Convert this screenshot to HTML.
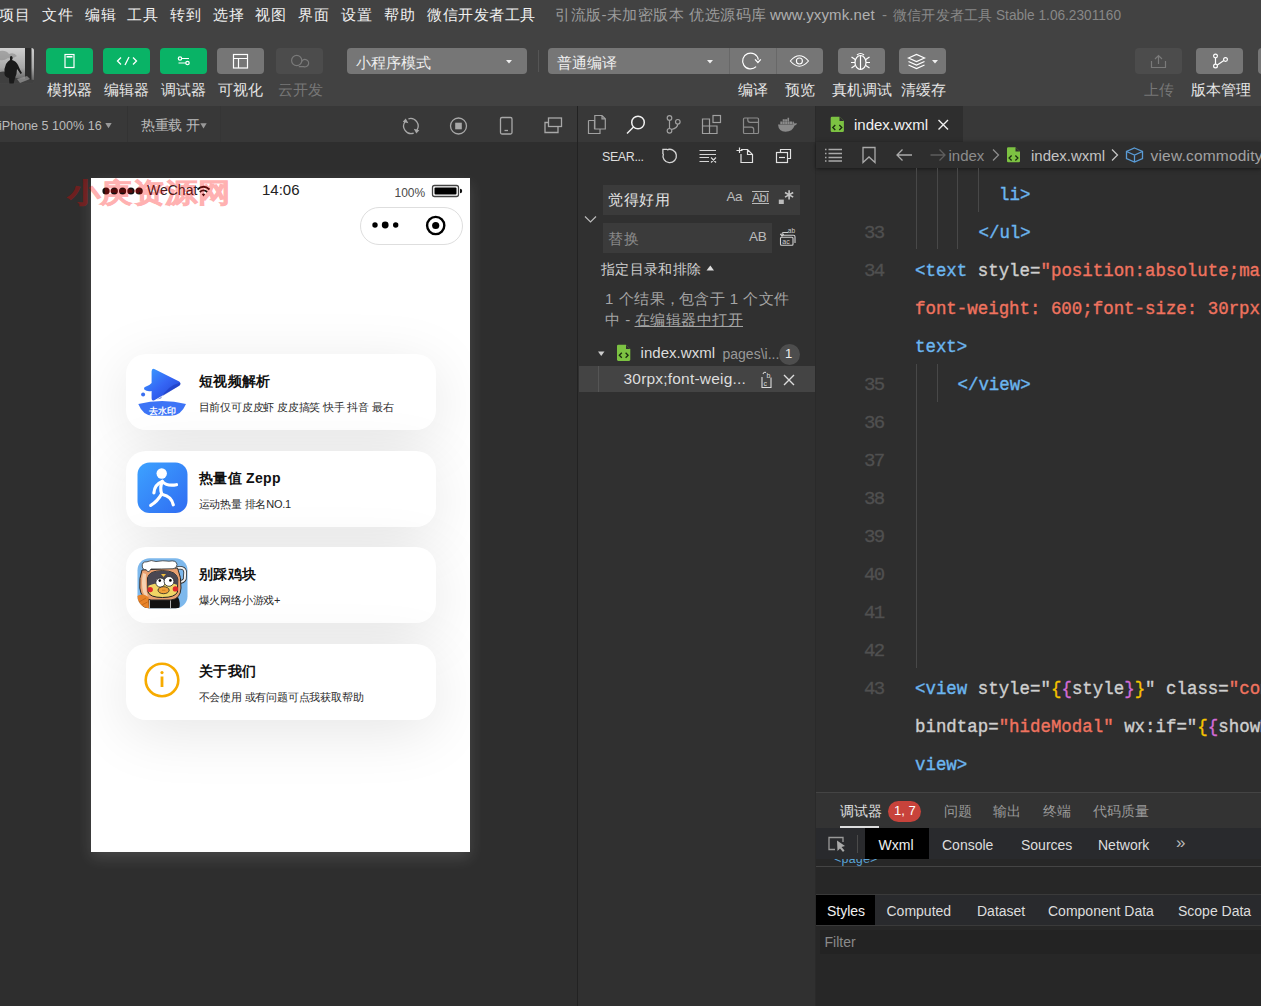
<!DOCTYPE html>
<html><head><meta charset="utf-8">
<style>
*{box-sizing:border-box;margin:0;padding:0}
html,body{width:1261px;height:1006px;overflow:hidden;background:#424242;font-family:"Liberation Sans",sans-serif;color:#ddd}
.a{position:absolute}
.t{position:absolute;white-space:nowrap;line-height:1}
svg{position:absolute;overflow:visible}
/* menu */
#menu .t{font-size:15px;letter-spacing:.5px;color:#f0f0f0;top:6.5px}
.btn{position:absolute;top:48px;height:26px;width:47px;border-radius:4px}
.g{background:#09b366}
.lbl{position:absolute;top:82px;font-size:15px;color:#e6e6e6;white-space:nowrap;line-height:1}
/* code */
.code{position:absolute;left:915px;margin-top:1.5px;font-family:"Liberation Mono",monospace;font-size:17.43px;white-space:pre;line-height:1;-webkit-text-stroke:.35px currentColor}
.ln{position:absolute;left:864px;margin-top:1px;font-family:"Liberation Mono",monospace;font-size:19px;letter-spacing:-1.6px;color:#505050;line-height:1;-webkit-text-stroke:.3px #505050}
.tg{color:#6cb6f0}.at{color:#cfcfcf}.st{color:#f0735f}.br1{color:#f5c400}.br2{color:#d36bd6}
.guide{position:absolute;width:1px;background:#484848}
.card{position:absolute;left:35px;width:310px;height:76px;border-radius:20px;background:#fff;box-shadow:0 12px 60px rgba(0,0,0,.1)}
.ct{position:absolute;left:108px;font-size:14px;letter-spacing:.3px;font-weight:bold;color:#111;white-space:nowrap;line-height:1}
.cs{position:absolute;left:107.5px;font-size:11px;letter-spacing:-.2px;color:#2a2a2a;white-space:nowrap;line-height:1}
</style></head><body>

<!-- MENU -->
<div id="menu">
<div class="t" style="left:-1px">项目</div>
<div class="t" style="left:42px">文件</div>
<div class="t" style="left:85px">编辑</div>
<div class="t" style="left:127px">工具</div>
<div class="t" style="left:170px">转到</div>
<div class="t" style="left:213px">选择</div>
<div class="t" style="left:255px">视图</div>
<div class="t" style="left:298px">界面</div>
<div class="t" style="left:341px">设置</div>
<div class="t" style="left:384px">帮助</div>
<div class="t" style="left:427px">微信开发者工具</div>
<div class="t" style="left:555px;color:#9c9c9c">引流版-未加密版本</div>
<div class="t" style="left:689px;color:#9c9c9c">优选源码库</div>
<div class="t" style="left:770px;color:#b0b0b0;letter-spacing:.1px">www.yxymk.net</div>
<div class="t" style="left:882px;color:#888">-</div>
<div class="t" style="left:893px;top:8px;color:#888;font-size:14px;letter-spacing:.2px">微信开发者工具</div>
<div class="t" style="left:996px;color:#888;letter-spacing:0;transform-origin:0 0;transform:scaleX(.91)">Stable 1.06.2301160</div>
</div>

<!-- TOOLBAR -->
<svg style="left:0;top:48px" width="34" height="36">
 <defs><linearGradient id="av" x1="0" y1="0" x2="0" y2="1"><stop offset="0" stop-color="#d0d0d0"/><stop offset=".55" stop-color="#a8a8a8"/><stop offset="1" stop-color="#4a4a4a"/></linearGradient>
 <clipPath id="avc"><rect x="-2" y="0" width="36" height="35.6" rx="2.5"/></clipPath></defs>
 <g clip-path="url(#avc)">
 <rect x="0" y="0" width="34" height="36" fill="url(#av)"/>
 <path d="M0 3 Q6 2 9 6 Q14 4 17 8 Q13 11 8 10 Q4 13 0 12Z" fill="#8a8a8a" opacity=".6"/>
 <rect x="25" y="0" width="6.5" height="32" fill="#2c2c2c"/>
 <path d="M0 24 Q8 22 16 30 L34 32 V36 H0Z" fill="#404040"/>
 <path d="M10 9 Q11 7 12.5 9 Q13 11 12 12 Q16 13 18 17 Q20 22 22 25 L20.5 26 Q18 22 17 21 Q17 26 15 30 L13.5 36 H9.5 Q9 32 9 30 Q5 29 4.5 26 Q4 20 6 16 Q8 13 10 12Z" fill="#1a1a1a"/>
 <path d="M17 31 L27 28 L30 31 L20 35Z" fill="#9a9a9a" opacity=".7"/>
 </g>
</svg>
<div class="btn g" style="left:46px"></div>
<div class="btn g" style="left:103px"></div>
<div class="btn g" style="left:160px"></div>
<div class="btn" style="left:217px;background:#767676"></div>
<div class="btn" style="left:276px;background:#4c4c4c"></div>
<div class="lbl" style="left:47px">模拟器</div>
<div class="lbl" style="left:104px">编辑器</div>
<div class="lbl" style="left:161px">调试器</div>
<div class="lbl" style="left:218px">可视化</div>
<div class="lbl" style="left:278px;color:#777">云开发</div>

<div class="a" style="left:347px;top:48px;width:180px;height:26px;background:#767676;border-radius:4px"></div>
<div class="t" style="left:356px;top:55px;font-size:15px;color:#eee">小程序模式</div>
<div class="a" style="left:538px;top:50px;width:1px;height:22px;background:#555"></div>
<div class="a" style="left:548px;top:48px;width:275px;height:26px;background:#767676;border-radius:4px"></div>
<div class="a" style="left:729px;top:48px;width:1px;height:26px;background:#686868"></div>
<div class="a" style="left:776px;top:48px;width:1px;height:26px;background:#686868"></div>
<div class="t" style="left:557px;top:55px;font-size:15px;color:#eee">普通编译</div>
<div class="btn" style="left:838px;background:#767676"></div>
<div class="btn" style="left:899px;background:#767676"></div>
<div class="lbl" style="left:738px">编译</div>
<div class="lbl" style="left:785px">预览</div>
<div class="lbl" style="left:832px">真机调试</div>
<div class="lbl" style="left:901px">清缓存</div>
<div class="btn" style="left:1135px;background:#4c4c4c"></div>
<div class="btn" style="left:1196px;background:#767676"></div>
<div class="btn" style="left:1258px;background:#767676"></div>
<div class="lbl" style="left:1144px;color:#777">上传</div>
<div class="lbl" style="left:1191px">版本管理</div>

<!-- SIMULATOR -->
<div class="a" style="left:0;top:106px;width:577px;height:900px;background:#2e2e2e"></div>
<div class="a" style="left:0;top:106px;width:577px;height:36px;background:#383838"></div>
<div class="a" style="left:127px;top:106px;width:1px;height:36px;background:#333"></div>
<div class="a" style="left:220px;top:106px;width:1px;height:36px;background:#353535"></div>
<div class="t" style="left:-1px;top:118.5px;font-size:13.5px;color:#bbb;transform-origin:0 0;transform:scaleX(.93)">iPhone 5 100% 16</div>
<div class="t" style="left:141px;top:118px;font-size:14px;color:#bbb;letter-spacing:-.3px">热重载 开</div>
<div class="a" style="left:577px;top:106px;width:1px;height:900px;background:#222"></div>

<!-- phone -->
<div class="a" style="left:91px;top:178px;width:379px;height:674px;background:#fff;box-shadow:0 6px 14px rgba(255,255,255,.13);overflow:hidden">
 <!-- status bar -->
 <svg style="left:0;top:0" width="379" height="70">
  <g fill="#111"><circle cx="15" cy="13" r="3.6"/><circle cx="23.3" cy="13" r="3.6"/><circle cx="31.6" cy="13" r="3.6"/><circle cx="39.9" cy="13" r="3.6"/><circle cx="48.2" cy="13" r="3.6"/></g>
  <g fill="none" stroke="#111" stroke-width="1.8"><path d="M106.5 11.5 Q112.5 6 118.5 11.5"/><path d="M108.8 14 Q112.5 10.8 116.2 14"/></g>
  <path d="M110.8 16.2 L112.5 18.5 L114.2 16.2 Q112.5 14.8 110.8 16.2Z" fill="#111"/>
  <rect x="341.5" y="7.5" width="26" height="11" rx="2" fill="none" stroke="#444" stroke-width="1.3"/>
  <rect x="343.5" y="9.5" width="22" height="7" rx="1" fill="#000"/>
  <path d="M369 10.8 A2.2 2.2 0 0 1 369 15.2 Z" fill="#111"/>
 </svg>
 <div class="t" style="left:56px;top:5px;font-size:14px;color:#222">WeChat</div>
 <div class="t" style="left:171px;top:4px;font-size:15px;color:#222">14:06</div>
 <div class="t" style="left:303.5px;top:9px;font-size:12px;color:#4a4a4a">100%</div>
 <!-- capsule -->
 <div class="a" style="left:268.5px;top:29px;width:103px;height:37.5px;border:1px solid #dedede;border-radius:19px;background:#fff"></div>
 <svg style="left:0;top:0" width="379" height="70">
  <circle cx="284" cy="47" r="2.7" fill="#000"/><circle cx="294.2" cy="47" r="3.4" fill="#000"/><circle cx="304.7" cy="47" r="2.7" fill="#000"/>
  <circle cx="344.7" cy="47.5" r="8.6" fill="none" stroke="#000" stroke-width="2.4"/><circle cx="344.7" cy="47.5" r="3.6" fill="#000"/>
 </svg>
 <!-- cards -->
 <div class="card" style="top:176px"></div>
 <div class="card" style="top:273px"></div>
 <div class="card" style="top:369px"></div>
 <div class="card" style="top:466px"></div>
 <div class="ct" style="top:196px">短视频解析</div>
 <div class="cs" style="top:223.5px">目前仅可皮皮虾 皮皮搞笑 快手 抖音 最右</div>
 <div class="ct" style="top:293px">热量值 Zepp</div>
 <div class="cs" style="top:320.5px">运动热量 排名NO.1</div>
 <div class="ct" style="top:389px">别踩鸡块</div>
 <div class="cs" style="top:416.5px">爆火网络小游戏+</div>
 <div class="ct" style="top:486px">关于我们</div>
 <div class="cs" style="top:513.5px">不会使用 或有问题可点我获取帮助</div>
 <!-- icons -->
 <svg style="left:0;top:0" width="379" height="674">
  <defs>
   <linearGradient id="pl" x1="0" y1="0" x2="1" y2="1"><stop offset="0" stop-color="#3aa0ff"/><stop offset=".5" stop-color="#3566f5"/><stop offset="1" stop-color="#1f3fd0"/></linearGradient>
   <linearGradient id="zp" x1="0" y1="0" x2="1" y2="1"><stop offset="0" stop-color="#3da2ff"/><stop offset="1" stop-color="#2f6cf2"/></linearGradient>
  </defs>
  <!-- play icon -->
  <path d="M60.6 193.5 Q60.6 189.8 63.8 191.2 L88.2 203.5 Q90.6 205.7 88.2 207.8 L63.8 222 Q60.6 223.8 60.6 220.2 L60.6 213 Q56 213.8 53.5 211.8 Q52.2 209.8 54.5 208.8 Q59 207.2 60.6 205 Z" fill="url(#pl)"/>
  <path d="M70 220.5 Q76 208 88.6 204.8 Q90.6 205.7 88.2 207.8 L66 221.5Z" fill="#1c36b8" opacity=".55"/>
  <circle cx="52.1" cy="216.6" r="2" fill="#3a6ff0"/>
  <path d="M47.3 226 Q71 220 95 226 Q90 237.8 80 237.8 L62 237.8 Q52 237.8 47.3 226Z" fill="#3d74f6"/>
  <text x="71" y="235.5" font-size="8.5" fill="#fff" text-anchor="middle" font-weight="bold">去水印</text>
  <!-- zepp -->
  <rect x="46.5" y="284.5" width="50" height="50.5" rx="12" fill="url(#zp)"/>
  <g fill="none" stroke="#fff" stroke-width="3.2" stroke-linecap="round">
   <path d="M62.9 314.8 Q63.5 306.5 71.3 303.5 Q76 308.5 85.5 306.7"/>
   <path d="M71.3 303.5 Q68.5 309.5 70.7 315.8 Q66.5 323.5 59.7 327.4"/>
   <path d="M71.5 316.5 Q80.4 318.4 82.3 326.8"/>
  </g>
  <circle cx="70.7" cy="295.5" r="5.2" fill="#fff"/>
  <!-- chicken -->
  <g>
   <clipPath id="ck"><rect x="46.5" y="380.2" width="50" height="50" rx="12"/></clipPath>
   <g clip-path="url(#ck)">
    <rect x="46" y="380" width="51" height="51" fill="#7db8ec"/>
    <path d="M52 421 Q50 431 53 431 H88 Q90 425 87 419 Z" fill="#111"/>
    <path d="M58.5 421 V431 M79.5 421 V431" stroke="#ddd" stroke-width=".8"/>
    <path d="M84.5 390.5 Q93.5 388 94.2 394 L93.8 401 Q92.5 404.5 86 404" fill="none" stroke="#333" stroke-width="3.6"/>
    <path d="M84.5 390.5 Q93.5 388 94.2 394 L93.8 401 Q92.5 404.5 86 404" fill="none" stroke="#f4f4f4" stroke-width="2"/>
    <path d="M51 392 Q48 400 48.8 410 Q50 421 60 422 L80 422 Q89.5 421 90 410 Q90.5 399 86.5 390 Z" fill="#e9a070" stroke="#2a2a2a" stroke-width="1"/>
    <path d="M52 395 Q50 405 52 414 Q54 419 57 420 Q54 408 55 396Z" fill="#f6d2b2"/>
    <path d="M56.5 400 Q58 392.7 71.5 392.7 Q85.5 392.7 86.8 401 L86.5 414 Q84 419.5 71.5 419.5 Q59 419.5 57 414Z" fill="#f0d565" stroke="#222" stroke-width="1"/>
    <path d="M56.7 400 Q58 392.7 71.5 392.7 Q85.5 392.7 86.8 401 L86.7 407 Q80 404 72 405 Q63 405 56.8 408Z" fill="#4a4752"/>
    <path d="M70 396 L72.5 399 L75 396Z" fill="#f0c040"/>
    <circle cx="69.4" cy="404.6" r="4.6" fill="#fff" stroke="#222" stroke-width=".8"/><circle cx="78" cy="403.4" r="4.9" fill="#fff" stroke="#222" stroke-width=".8"/>
    <circle cx="68.8" cy="402.6" r="1.3" fill="#000"/><circle cx="79.4" cy="402.4" r="1.3" fill="#000"/>
    <circle cx="59.2" cy="411.6" r="2.7" fill="#e02a2a"/><circle cx="84.4" cy="410.9" r="2.7" fill="#e02a2a"/>
    <ellipse cx="72.6" cy="412.2" rx="5.6" ry="3.5" fill="#f0a038" stroke="#222" stroke-width=".8"/>
    <path d="M71 412.2 H74.5" stroke="#b56a10" stroke-width=".6"/>
    <path d="M51.3 389 Q50.5 383.5 56 383.8 Q60 381.5 65 383.5 Q72 382.2 78 383.2 Q85.5 381.8 86 386.5 Q86 390.5 82 390.8 Q70 391 60 391 Q58 395 56.5 393.5 Q55.5 391 53.5 391.5 Q51.5 391 51.3 389Z" fill="#fff" stroke="#333" stroke-width=".8"/>
    <path d="M46 418 Q52 414.5 57.5 419 L58 431 H46Z" fill="#e8832a"/>
    <path d="M48 424 L55 420 M49 428 L56.5 424" stroke="#b05a10" stroke-width=".6"/>
   </g>
  </g>
  <!-- info -->
  <circle cx="71" cy="502" r="16.3" fill="none" stroke="#f7ab00" stroke-width="2.6"/>
  <circle cx="71" cy="494.6" r="1.6" fill="#f7ab00"/>
  <rect x="69.6" y="498.5" width="2.8" height="10.5" fill="#f7ab00"/>
 </svg>
</div>
<div class="t" style="left:68px;top:180px;font-size:27px;font-weight:bold;-webkit-text-stroke:.7px #ff0000;color:#ff0000;opacity:.3;transform-origin:0 0;transform:scaleX(1.2)">小庚资源网</div>

<!-- SEARCH PANEL -->
<div class="a" style="left:578px;top:106px;width:237px;height:900px;background:#303030"></div>
<div class="a" style="left:578px;top:106px;width:237px;height:36px;background:#383838"></div>
<div class="a" style="left:815px;top:106px;width:1px;height:900px;background:#2a2a2a"></div>
<div class="t" style="left:602px;top:151px;font-size:12.5px;color:#ddd;letter-spacing:-.4px">SEAR...</div>
<div class="a" style="left:603px;top:184.5px;width:197px;height:30.5px;background:#3b3b3b"></div>
<div class="a" style="left:603px;top:223px;width:169px;height:30px;background:#3b3b3b"></div>
<div class="t" style="left:608px;top:192px;font-size:15px;letter-spacing:.5px;color:#e2e2e2">觉得好用</div>
<div class="t" style="left:608px;top:230.5px;font-size:15px;letter-spacing:.5px;color:#8a8a8a">替换</div>
<div class="t" style="left:726.5px;top:190px;font-size:13.5px;color:#bbb;letter-spacing:-.5px">Aa</div>
<div class="t" style="left:752px;top:192px;font-size:12.5px;color:#bbb;letter-spacing:-.8px">AbI</div><div class="a" style="left:751.5px;top:190.5px;width:17px;height:1.2px;background:#bbb"></div><div class="a" style="left:751.5px;top:203px;width:17px;height:1.2px;background:#bbb"></div>
<div class="t" style="left:749px;top:229.5px;font-size:13.5px;color:#bbb;letter-spacing:-.3px">AB</div>
<div class="t" style="left:601px;top:262px;font-size:14px;letter-spacing:.35px;color:#d0d0d0">指定目录和排除</div>
<div class="t" style="left:605px;top:291px;font-size:15px;color:#a5a5a5;letter-spacing:.5px">1 个结果，</div>
<div class="t" style="left:678.5px;top:291px;font-size:15px;color:#a5a5a5;letter-spacing:.5px">包含于 1 个文件</div>
<div class="t" style="left:605px;top:312px;font-size:15px;color:#a5a5a5;letter-spacing:.5px">中 -</div>
<div class="t" style="left:634.5px;top:312px;font-size:15px;color:#a5a5a5;letter-spacing:.5px;text-decoration:underline;text-underline-offset:1px">在编辑器中打开</div>
<div class="t" style="left:640.5px;top:345px;font-size:15px;color:#ddd;letter-spacing:.05px">index.wxml</div>
<div class="t" style="left:722.5px;top:346.5px;font-size:14px;color:#999;letter-spacing:0">pages\i...</div>
<div class="a" style="left:778.5px;top:343.5px;width:21px;height:21px;border-radius:50%;background:#4d4d4d"></div>
<div class="t" style="left:785px;top:347px;font-size:13px;color:#eee">1</div>
<div class="a" style="left:579px;top:366px;width:236px;height:26px;background:#444"></div>
<div class="a" style="left:598px;top:366px;width:1px;height:26px;background:#555"></div>
<div class="t" style="left:623.5px;top:371px;font-size:15.5px;color:#ddd;letter-spacing:.2px">30rpx;font-weig...</div>
<svg style="left:0;top:0" width="816" height="400" fill="none" stroke="#a0a0a0" stroke-width="1.2">
 <path d="M588.5 120.5 H594.5 V129 M588.5 120.5 V133.5 H600 V129"/>
 <path d="M594.8 115.5 H602 L605.3 118.8 V129 H594.8 Z M602 115.5 V118.8 H605.3"/>
 <g stroke="#f2f2f2" stroke-width="1.5"><circle cx="638" cy="122.5" r="6.3"/><path d="M633.5 127 L627 133.5"/></g>
 <circle cx="669.5" cy="118" r="2.3"/><circle cx="669.5" cy="130.8" r="2.3"/><circle cx="677.8" cy="121.8" r="2.3"/>
 <path d="M669.5 120.3 V128.5 M677.8 124.1 Q677.5 128 671.5 129.5"/>
 <path d="M702.5 126 H709.5 V133.5 H702.5 Z M709.5 126 H717 V133.5 H709.5 M702.5 126 V119 H709.5 V126"/>
 <rect x="713" y="115.5" width="7.5" height="7"/>
 <g stroke="#8c8c8c"><rect x="743.5" y="118" width="15" height="15.5" rx="1"/>
 <path d="M747.8 118 V120 Q747.8 122.3 750.2 122.3 H758.5 M743.5 127.2 H751.3 Q753.7 127.2 753.7 129.6 V133.5"/></g>
 <path d="M778 124.6 H793.2 Q794.5 122.6 797.2 123.4 Q796 125.2 794.6 125.6 Q792.5 131.8 785.5 131.8 Q778.6 131.8 778 124.6 Z" fill="#8a8a8a" stroke="none"/>
 <path d="M792.4 124.6 Q792 122.5 793 121 Q794.5 122.5 794.6 124.6Z" fill="#8a8a8a" stroke="none"/>
 <path d="M780.3 121.6 h2.1 v2.6 h-2.1z M782.7 121.6 h2.1 v2.6 h-2.1z M785.1 121.6 h2.1 v2.6 h-2.1z M787.5 121.6 h2.1 v2.6 h-2.1z M789.9 121.6 h2.1 v2.6 h-2.1z M782.7 119.2 h2.1 v2.1 h-2.1z M785.1 119.2 h2.1 v2.1 h-2.1z M787.5 117.8 h1.6 v3.5 h-1.6z" fill="#8a8a8a" stroke="none"/>
 <g stroke="#d5d5d5" stroke-width="1.3"><path d="M666.9 149.9 A6.7 6.7 0 1 1 663.4 153.7"/><path d="M662.3 149.3 H667 M662.9 149.3 V154"/></g>
 <g stroke="#d5d5d5"><path d="M699.5 150.5 H716 M699.5 154.5 H716 M699.5 157.5 H709 M699.5 161.5 H709 M711 157.5 L716 162.5 M716 157.5 L711 162.5"/></g>
 <g stroke="#e2e2e2"><path d="M741 149.5 H747.5 L752.5 154.5 V162.5 H741 V154 M747.5 149.5 V154.5 H752.5 M739.5 147.5 V153 M736.5 150.5 H742.5"/></g>
 <g stroke="#e2e2e2"><path d="M780.5 152.5 V149.5 H790.5 V158.5 H787.5"/><rect x="776.5" y="152.5" width="11" height="10"/><path d="M779 157.5 H785"/></g>
 <path d="M585 216.5 L590.5 222 L596 216.5" stroke="#bbb"/>
 <rect x="778.8" y="199.6" width="5" height="4.4" fill="#bbb" stroke="none"/>
 <path d="M789.1 190.2 V199.4 M785 192.5 L793.2 197.1 M793.2 192.5 L785 197.1" stroke="#c4c4c4" stroke-width="1.6"/>
 <g stroke="#cfcfcf" stroke-width="1.1"><rect x="780.5" y="237.2" width="12.5" height="8" rx="1"/><path d="M782.5 235.2 H793.5 Q795 235.2 795 236.7 V243"/><path d="M788 232.5 H783.5 Q782 232.5 782 234 V236"/><path d="M780.3 233.8 L782 236 L783.7 233.8"/></g>
 <text x="782.3" y="243.8" font-size="7" fill="#cfcfcf" stroke="none" font-family="Liberation Sans">ac</text>
 <text x="787.8" y="233.2" font-size="6.5" fill="#cfcfcf" stroke="none" font-family="Liberation Sans">ab</text>
 <path d="M706.5 270.5 L710.3 265.5 L714 270.5 Z" fill="#ddd" stroke="none"/>
 <path d="M598 351.5 H604.5 L601.2 356 Z" fill="#ccc" stroke="none"/>
 <path d="M617 346 Q617 344.7 618.3 344.7 H626 L630.3 349 V359.5 Q630.3 360.9 629 360.9 H618.3 Q617 360.9 617 359.5 Z" fill="#7cc242" stroke="none"/>
 <path d="M626 344.7 V349 H630.3 Z" fill="#303030" stroke="none"/>
 <path d="M621.8 352.8 L619.3 355.3 L621.8 357.8 M625.6 352.8 L628.1 355.3 L625.6 357.8" stroke="#1a2a10" stroke-width="1.3"/>
 <g stroke="#ddd" stroke-width="1.1"><path d="M762 377 V387.5 H771 V377.5"/><text x="763.5" y="386" font-size="7" fill="#ddd" stroke="none" font-family="Liberation Sans">c</text><path d="M763 374 Q764 371.5 766 372.5"/><text x="766.5" y="378" font-size="7" fill="#ddd" stroke="none" font-family="Liberation Sans">b</text></g>
 <path d="M784 375 L794 385 M794 375 L784 385" stroke="#ddd" stroke-width="1.4"/>
</svg>

<!-- EDITOR -->
<div class="a" style="left:816px;top:106px;width:445px;height:686px;background:#2e2e2e"></div>
<div class="a" style="left:963px;top:106px;width:298px;height:35.5px;background:#383838"></div>
<div class="a" style="left:816px;top:141.5px;width:445px;height:26px;background:#2e2e2e;box-shadow:0 1px 4px rgba(0,0,0,.5)"></div>
<div class="t" style="left:854px;top:117px;font-size:15px;color:#f2f2f2;letter-spacing:0">index.wxml</div>
<div class="t" style="left:948.5px;top:147.5px;font-size:15px;color:#8c8c8c;letter-spacing:0">index</div>
<div class="t" style="left:1031px;top:147.5px;font-size:15px;color:#c4c4c4;letter-spacing:0">index.wxml</div>
<div class="t" style="left:1150.5px;top:147.5px;font-size:15.5px;color:#a2a2a2;letter-spacing:.2px">view.commodity</div>
<svg style="left:0;top:0" width="1261" height="172" fill="none" stroke="#b0b0b0" stroke-width="1.2">
 <path d="M830.7 118 Q830.7 116.7 832 116.7 H839.5 L843.9 121 V130.8 Q843.9 132.1 842.6 132.1 H832 Q830.7 132.1 830.7 130.8 Z" fill="#7cc242" stroke="none"/>
 <path d="M839.5 116.7 V121 H843.9 Z" fill="#2e2e2e" stroke="none"/>
 <path d="M835.3 125 L832.8 127.5 L835.3 130 M839.3 125 L841.8 127.5 L839.3 130" stroke="#1a2a10" stroke-width="1.3"/>
 <path d="M938.5 120 L948 129.5 M948 120 L938.5 129.5" stroke="#f0f0f0" stroke-width="1.4"/>
 <path d="M828.5 149.5 H842 M828.5 153.5 H842 M828.5 157.5 H842 M828.5 161 H842" stroke="#aaa" stroke-width="1.3"/>
 <path d="M825 149.5 h1.5 M825 153.5 h1.5 M825 157.5 h1.5 M825 161 h1.5" stroke="#aaa" stroke-width="1.3"/>
 <path d="M863 147.5 H875 V162.5 L869 157 L863 162.5 Z" stroke="#aaa" stroke-width="1.3"/>
 <path d="M897 155 H912 M902.5 149.5 L897 155 L902.5 160.5" stroke="#aaa" stroke-width="1.3"/>
 <path d="M930.5 155 H945 M939.5 149.5 L945 155 L939.5 160.5" stroke="#5e5e5e" stroke-width="1.3"/>
 <path d="M993 149.5 L998.5 155 L993 160.5" stroke="#8c8c8c" stroke-width="1.3"/>
 <path d="M1007 148.5 Q1007 147.2 1008.3 147.2 H1015.5 L1020 151.5 V161 Q1020 162.3 1018.7 162.3 H1008.3 Q1007 162.3 1007 161 Z" fill="#7cc242" stroke="none"/>
 <path d="M1015.5 147.2 V151.5 H1020 Z" fill="#2e2e2e" stroke="none"/>
 <path d="M1011.6 155.5 L1009.1 158 L1011.6 160.5 M1015.4 155.5 L1017.9 158 L1015.4 160.5" stroke="#1a2a10" stroke-width="1.3"/>
 <path d="M1112 149.5 L1117.5 155 L1112 160.5" stroke="#c4c4c4" stroke-width="1.3"/>
 <g stroke="#5a9bd5" stroke-width="1.3"><path d="M1134.5 148 L1142.5 151.5 V158.5 L1134.5 162 L1126.5 158.5 V151.5 Z M1126.5 151.5 L1134.5 155 L1142.5 151.5 M1134.5 155 V162"/></g>
</svg>
<!-- code -->
<div class="guide" style="left:916px;top:168px;height:81px"></div>
<div class="guide" style="left:937px;top:168px;height:81px"></div>
<div class="guide" style="left:957px;top:168px;height:81px"></div>
<div class="guide" style="left:978px;top:168px;height:44px"></div>
<div class="guide" style="left:916px;top:364px;height:304px"></div>
<div class="guide" style="left:937px;top:364px;height:38px"></div>
<div class="code" style="top:185px;left:999px"><span class="tg">li&gt;</span></div>
<div class="ln" style="top:223px">33</div>
<div class="code" style="top:223px;left:978.5px"><span class="tg">&lt;/ul&gt;</span></div>
<div class="ln" style="top:261px">34</div>
<div class="code" style="top:261px"><span class="tg">&lt;text</span> <span class="at">style=</span><span class="st">"position:absolute;margin</span></div>
<div class="code" style="top:299px"><span class="st">font-weight: 600;font-size: 30rpx</span></div>
<div class="code" style="top:337px"><span class="tg">text&gt;</span></div>
<div class="ln" style="top:375px">35</div>
<div class="code" style="top:375px;left:957.5px"><span class="tg">&lt;/view&gt;</span></div>
<div class="ln" style="top:413px">36</div>
<div class="ln" style="top:451px">37</div>
<div class="ln" style="top:489px">38</div>
<div class="ln" style="top:527px">39</div>
<div class="ln" style="top:565px">40</div>
<div class="ln" style="top:603px">41</div>
<div class="ln" style="top:641px">42</div>
<div class="ln" style="top:679px">43</div>
<div class="code" style="top:679px"><span class="tg">&lt;view</span> <span class="at">style=</span><span class="at">"</span><span class="br1">{</span><span class="br2">{</span><span class="at">style</span><span class="br2">}</span><span class="br1">}</span><span class="at">"</span> <span class="at">class=</span><span class="st">"commodity-modal</span></div>
<div class="code" style="top:717px"><span class="at">bindtap=</span><span class="st">"hideModal"</span> <span class="at">wx:if=</span><span class="at">"</span><span class="br1">{</span><span class="br2">{</span><span class="at">showModal</span><span class="br2">}</span><span class="br1">}</span><span class="at">"</span></div>
<div class="code" style="top:755px"><span class="tg">view&gt;</span></div>

<!-- DEBUG -->
<div class="a" style="left:816px;top:792px;width:445px;height:214px;background:#272727"></div>
<div class="a" style="left:816px;top:792px;width:445px;height:1px;background:#444"></div>
<div class="a" style="left:816px;top:793px;width:445px;height:35px;background:#333"></div>
<div class="t" style="left:839.5px;top:803.5px;font-size:14px;color:#e0e0e0">调试器</div>
<div class="a" style="left:840px;top:825.5px;width:39px;height:2px;background:#ddd"></div>
<div class="a" style="left:888px;top:800.5px;width:32.5px;height:21px;border-radius:10.5px;background:#c8433b"></div>
<div class="t" style="left:894px;top:804px;font-size:13px;color:#fff">1, 7</div>
<div class="t" style="left:944px;top:803.5px;font-size:14px;color:#999">问题</div>
<div class="t" style="left:993px;top:803.5px;font-size:14px;color:#999">输出</div>
<div class="t" style="left:1043px;top:803.5px;font-size:14px;color:#999">终端</div>
<div class="t" style="left:1093px;top:803.5px;font-size:14px;color:#999">代码质量</div>
<div class="a" style="left:816px;top:828px;width:445px;height:31px;background:#292a2d"></div>
<div class="a" style="left:865px;top:828px;width:64px;height:31px;background:#000"></div>
<div class="a" style="left:857px;top:835px;width:1px;height:18px;background:#4a4a4a"></div>
<div class="t" style="left:878.5px;top:837.5px;font-size:14px;color:#f0f0f0">Wxml</div>
<div class="t" style="left:942px;top:837.5px;font-size:14px;color:#ddd">Console</div>
<div class="t" style="left:1021px;top:837.5px;font-size:14px;color:#ddd">Sources</div>
<div class="t" style="left:1098px;top:837.5px;font-size:14px;color:#ddd">Network</div>
<div class="t" style="left:1176px;top:834px;font-size:17px;color:#bbb">»</div>
<div class="a" style="left:816px;top:859px;width:445px;height:7px;overflow:hidden;background:#272727">
 <div class="t" style="left:18px;top:-5px;font-size:12.5px;color:#5ba3d6;font-family:'Liberation Mono',monospace;letter-spacing:-.3px">&lt;page&gt;</div>
</div>
<div class="a" style="left:816px;top:866px;width:445px;height:1px;background:#444"></div>
<div class="a" style="left:816px;top:867px;width:445px;height:27px;background:#272727"></div>
<div class="a" style="left:816px;top:894px;width:445px;height:1px;background:#3a3a3a"></div>
<div class="a" style="left:816px;top:895px;width:445px;height:30px;background:#292a2d"></div>
<div class="a" style="left:816px;top:895px;width:59px;height:30px;background:#000"></div>
<div class="a" style="left:816px;top:925px;width:445px;height:1px;background:#3a3a3a"></div>
<div class="t" style="left:827px;top:904px;font-size:14px;color:#f0f0f0">Styles</div>
<div class="t" style="left:886.5px;top:904px;font-size:14px;color:#ddd">Computed</div>
<div class="t" style="left:977px;top:904px;font-size:14px;color:#ddd">Dataset</div>
<div class="t" style="left:1048px;top:904px;font-size:14px;color:#ddd">Component Data</div>
<div class="t" style="left:1178px;top:904px;font-size:14px;color:#ddd">Scope Data</div>
<div class="a" style="left:820px;top:929.5px;width:441px;height:24px;background:#232323"></div>
<div class="t" style="left:824.5px;top:935px;font-size:14px;color:#8a8a8a">Filter</div>
<svg style="left:0;top:0" width="1261" height="1006" fill="none">
 <path d="M835 849.5 H829 V837.5 H843 V842" stroke="#999" stroke-width="1.3"/>
 <path d="M837 840.5 L837.5 851 L840 848.5 L843 852 L844.5 850.5 L841.5 847 L845 846 Z" fill="#aaa"/>
</svg>


<!-- toolbar icons -->
<svg style="left:0;top:0" width="1261" height="106" fill="none" stroke="#fff" stroke-width="1.2">
 <rect x="65" y="54.5" width="9" height="13" />
 <rect x="66.5" y="56" width="6" height="1.6" fill="#fff" stroke="none"/>
 <path d="M121 57.5 L117.5 61 L121 64.5 M133 57.5 L136.5 61 L133 64.5 M129 57 L125 65" stroke-width="1.3"/>
 <path d="M181 58.5 H189 M178.5 63 H186" stroke-width="1.2"/>
 <circle cx="180" cy="58.5" r="1.7" fill="#09b366"/><circle cx="187.5" cy="63" r="1.7" fill="#09b366"/>
 <rect x="233.5" y="54.5" width="14" height="13.5"/>
 <path d="M233.5 58.5 H247.5 M238.5 58.5 V68"/>
 <g stroke="#7a7a7a"><circle cx="296.7" cy="60.5" r="5.1"/><path d="M301.3 62.6 A3.7 3.7 0 1 1 303.6 66.6 H298.8"/></g>
 <path d="M506 60 L512 60 L509 63.5 Z" fill="#eee" stroke="none"/>
 <path d="M707 60 L713 60 L710 63.5 Z" fill="#eee" stroke="none"/>
 <path d="M756.1 66.6 A7.9 7.9 0 1 1 758.3 59.6"/><path d="M755 59.3 L757.9 62.5 L760.8 59.3"/>
 <path d="M790.3 61 Q799.4 50.5 808.5 61 Q799.4 71.5 790.3 61 Z" stroke-width="1.1"/><circle cx="799.4" cy="61" r="3" stroke-width="1.1"/>
 <ellipse cx="860.5" cy="62.5" rx="5.5" ry="7"/><path d="M860.5 55.5 V69.5 M857 55 Q860.5 52 864 55 M851.5 57 L855.2 59.5 M869.5 57 L865.8 59.5 M851 62.5 H855 M866 62.5 H870 M851.5 68 L855.2 65.5 M869.5 68 L865.8 65.5"/>
 <path d="M908.5 58 L916.5 54.5 L924.5 58 L916.5 61.5 Z M908.5 61.5 L916.5 65 L924.5 61.5 M908.5 65 L916.5 68.5 L924.5 65"/>
 <path d="M932 60 L938 60 L935 63.5 Z" fill="#eee" stroke="none"/>
 <g stroke="#7a7a7a"><path d="M1151.5 61 V67.5 H1165.5 V61 M1158.5 64 V55.5 M1155 59 L1158.5 55.5 L1162 59"/></g>
 <circle cx="1215.5" cy="56" r="1.9"/><circle cx="1215.5" cy="66" r="1.9"/><circle cx="1225.5" cy="59.5" r="1.9"/>
 <path d="M1215.5 58 V64 M1217.3 65 L1223.8 60.5"/>
</svg>
<!-- sim toolbar icons -->
<svg style="left:0;top:106px" width="577" height="36" fill="none" stroke="#a8a8a8" stroke-width="1.3">
 <path d="M408.4 12.8 A7.6 7.6 0 0 1 416.7 24.5"/>
 <path d="M413.7 27.2 A7.6 7.6 0 0 1 405.3 15.3"/>
 <path d="M416.3 27.5 L413.8 22.8 L419.3 24.2 Z" fill="#a8a8a8" stroke="none"/>
 <path d="M405.7 12.6 L408.4 17.3 L402.8 15.8 Z" fill="#a8a8a8" stroke="none"/>
 <circle cx="458.5" cy="20" r="8"/><rect x="455.2" y="16.7" width="6.6" height="6.6" fill="#a8a8a8" stroke="none"/>
 <rect x="500.5" y="11.5" width="11.5" height="16.5" rx="1.5"/><path d="M504.5 24.5 H508"/>
 <rect x="548.5" y="12" width="13" height="8.5"/><path d="M548.5 16.5 H545 V26.5 H558 V20.5"/>
 <path d="M105.3 17 L111.7 17 L108.5 22.3 Z" fill="#999" stroke="none"/>
 <path d="M200.3 17.2 L206.7 17.2 L203.5 22.4 Z" fill="#999" stroke="none"/>
</svg>
</body></html>
